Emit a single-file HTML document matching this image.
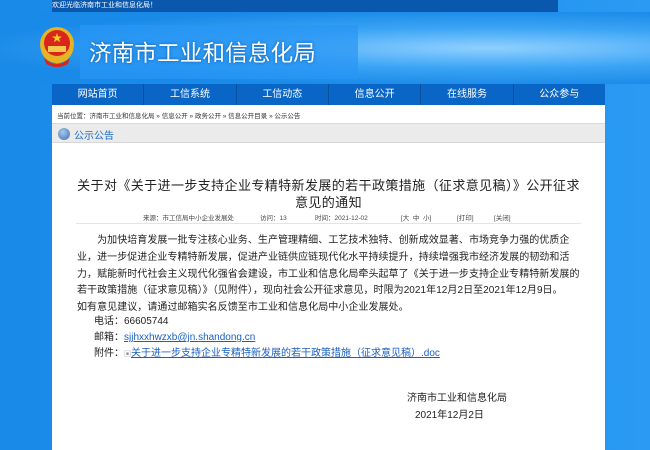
<!DOCTYPE html>
<html><head><meta charset="utf-8"><style>
*{margin:0;padding:0;box-sizing:border-box}
body{width:650px;height:450px;overflow:hidden;font-family:"Liberation Sans","Noto Sans CJK SC",sans-serif;background:linear-gradient(90deg,#1a8ae8 0%,#1d8fee 50%,#2a9af2 100%);position:relative}
.top{position:absolute;left:52px;top:0;width:506px;height:12px;background:#0a58ad;color:#fff;font-size:7px;line-height:12px;padding-left:0}
.hdr{position:absolute;left:0;top:12px;width:650px;height:72px;background:radial-gradient(ellipse at 75% 50%,#8fd0ff 0%,#3aa4f5 40%,#1a8ae8 75%)}
.hblk{position:absolute;left:80px;top:13px;width:278px;height:54px;background:rgba(40,150,245,.7)}
.title{position:absolute;left:89px;top:36px;font-size:22.5px;color:#fff;letter-spacing:0.2px;text-shadow:0 0 3px #0b5aa8}
.emb{position:absolute;left:38px;top:26px}
.nav{position:absolute;left:52px;top:84px;width:553px;height:21px;background:#0a66c6;display:flex}
.nav div{flex:1;color:#fff;font-size:10px;text-align:center;line-height:21px;border-right:1px solid #08509c}
.nav div:last-child{border-right:none}
.main{position:absolute;left:52px;top:105px;width:553px;height:345px;background:#fff}
.bc{position:absolute;left:5px;top:5px;font-size:6.5px;color:#333}
.sec{position:absolute;left:0;top:18px;width:553px;height:20px;background:#ebebeb;border-top:1px solid #d8d8d8;border-bottom:1px solid #d8d8d8}
.sec span{position:absolute;left:22px;top:3px;font-size:10px;color:#1a6bc4}
.sec i{position:absolute;left:6px;top:4px;width:12px;height:12px;border-radius:50%;background:radial-gradient(circle at 40% 35%,#a8c8ec,#3a6fb0)}
.h1{position:absolute;left:0;top:72px;width:553px;text-align:center;font-size:13px;line-height:17px;color:#222;white-space:nowrap;letter-spacing:0.4px}
.meta{position:absolute;left:0;top:107px;width:553px;font-size:6.5px;color:#444}
.meta span{position:absolute;top:0}
.line{position:absolute;left:24px;top:118px;width:505px;border-top:1px solid #e4e4e4}
.p{position:absolute;left:25px;top:128px;width:530px;font-size:10px;line-height:16.8px;color:#222;white-space:nowrap;letter-spacing:0.05px}
.f{position:absolute;left:42px;font-size:10px;color:#222}
a{color:#1a5fc0;text-decoration:underline}
</style></head><body>
<div class="top">欢迎光临济南市工业和信息化局！</div>
<div class="hdr"><div class="hblk"></div></div>
<svg class="emb" width="38" height="42" viewBox="0 0 38 42"><circle cx="19" cy="18" r="17" fill="#e6b422"/><circle cx="19" cy="17" r="13" fill="#d8261c"/><polygon points="19,7 20.2,10.5 24,10.5 21,12.7 22.1,16.2 19,14 15.9,16.2 17,12.7 14,10.5 17.8,10.5" fill="#f5d020"/><rect x="10" y="20" width="18" height="6" fill="#f2c94c"/><path d="M6 32 Q19 44 32 32 L30 38 Q19 44 8 38Z" fill="#d8261c"/><path d="M4 22 Q6 34 19 36 Q32 34 34 22" fill="none" stroke="#e6b422" stroke-width="3"/></svg>
<div class="title">济南市工业和信息化局</div>
<div class="nav"><div>网站首页</div><div>工信系统</div><div>工信动态</div><div>信息公开</div><div>在线服务</div><div>公众参与</div></div>
<div class="main">
<div class="bc">当前位置：济南市工业和信息化局 » 信息公开 » 政务公开 » 信息公开目录 » 公示公告</div>
<div class="sec"><i></i><span>公示公告</span></div>
<div class="h1">关于对《关于进一步支持企业专精特新发展的若干政策措施（征求意见稿）》公开征求<br>意见的通知</div>
<div class="meta"><span style="left:91px">来源：市工信局中小企业发展处</span><span style="left:208px">访问：13</span><span style="left:263px">时间：2021-12-02</span><span style="left:349px">[大 &nbsp;中 &nbsp;小]</span><span style="left:405px">[打印]</span><span style="left:442px">[关闭]</span></div>
<div class="line"></div>
<div class="p">&#12288;&#12288;为加快培育发展一批专注核心业务、生产管理精细、工艺技术独特、创新成效显著、市场竞争力强的优质企<br>业，进一步促进企业专精特新发展，促进产业链供应链现代化水平持续提升，持续增强我市经济发展的韧劲和活<br>力，赋能新时代社会主义现代化强省会建设，市工业和信息化局牵头起草了《关于进一步支持企业专精特新发展的<br>若干政策措施（征求意见稿）》（见附件），现向社会公开征求意见，时限为2021年12月2日至2021年12月9日。<br>如有意见建议，请通过邮箱实名反馈至市工业和信息化局中小企业发展处。</div>
<div class="f" style="top:207px">电话：66605744</div>
<div class="f" style="top:223px">邮箱：<a>sjjhxxhwzxb@jn.shandong.cn</a></div>
<div class="f" style="top:239px">附件：<span style="font-size:7px;color:#889">▣</span><a>关于进一步支持企业专精特新发展的若干政策措施（征求意见稿）.doc</a></div>
<div class="f" style="top:284px;left:355px">济南市工业和信息化局</div>
<div class="f" style="top:301px;left:363px">2021年12月2日</div>
</div>
</body></html>
